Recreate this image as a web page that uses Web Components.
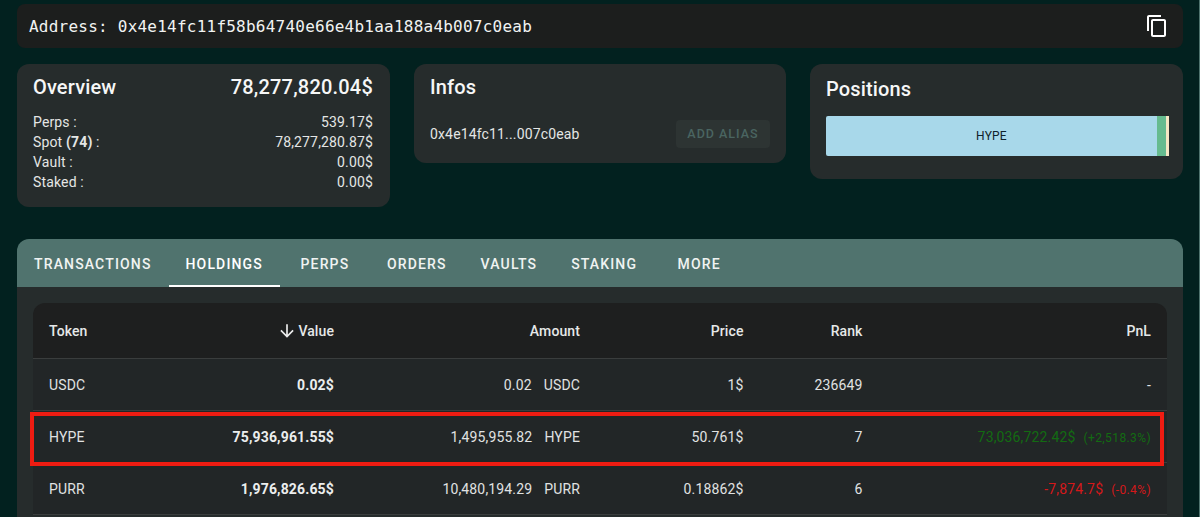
<!DOCTYPE html>
<html lang="en">
<head>
<meta charset="utf-8">
<title>Address</title>
<style>
  html, body { margin: 0; height: 517px; overflow: hidden; background: #02211f; }
  body { font-family: Roboto, "Liberation Sans", sans-serif; color: #fff; border-right: 1px solid #4f736e; box-sizing: border-box; }
</style>
</head>
<body>
<wallet-page></wallet-page>

<script>
class AddressBar extends HTMLElement {
  constructor() {
    super();
    this.attachShadow({ mode: 'open' });
  }

  connectedCallback() {
    this.shadowRoot.innerHTML = `
      <style>
        :host { display: flex; align-items: center; justify-content: space-between; height: 44px; padding: 0 14px 0 12px; box-sizing: border-box; background: #1c1e1d; border-radius: 8px; }
        .addr { font: 16px "DejaVu Sans Mono", monospace; letter-spacing: 0.23px; color: #f1f3f2; white-space: pre; }
        svg { display: block; }
      </style>
      <span class="addr">Address: ${this.getAttribute('address')}</span>
      <svg width="24" height="24" viewBox="0 0 24 24" fill="#fff"><path d="M16 1H4c-1.1 0-2 .9-2 2v14h2V3h12V1zm3 4H8c-1.1 0-2 .9-2 2v14c0 1.1.9 2 2 2h11c1.1 0 2-.9 2-2V7c0-1.1-.9-2-2-2zm0 16H8V7h11v14z"/></svg>
    `;
  }
}
customElements.define('address-bar', AddressBar);

class InfoCard extends HTMLElement {
  constructor() {
    super();
    this.attachShadow({ mode: 'open' });
  }

  connectedCallback() {
    this.shadowRoot.innerHTML = `
      <style>
        :host { display: block; box-sizing: border-box; background: #262c2c; border-radius: 12px; padding: 11px 17px 16px 16px; }
        .head { display: flex; justify-content: space-between; align-items: center; height: 24px; font-size: 20px; font-weight: 500; letter-spacing: 0.15px; color: #f6f7f7; }
      </style>
      <div class="head"><slot name="title"></slot><slot name="total"></slot></div>
      <slot></slot>
    `;
  }
}
customElements.define('info-card', InfoCard);

class StatRow extends HTMLElement {
  constructor() {
    super();
    this.attachShadow({ mode: 'open' });
  }

  connectedCallback() {
    this.shadowRoot.innerHTML = `
      <style>
        :host { display: flex; justify-content: space-between; height: 20px; line-height: 20px; font-size: 14px; letter-spacing: 0.15px; color: #e4e6e5; }
      </style>
      <span><slot></slot></span><span>${this.getAttribute('value')}</span>
    `;
  }
}
customElements.define('stat-row', StatRow);

class PositionBar extends HTMLElement {
  constructor() {
    super();
    this.attachShadow({ mode: 'open' });
  }

  connectedCallback() {
    this.shadowRoot.innerHTML = `
      <style>
        :host { display: flex; height: 40px; margin: 15px -3px 0 0; font-size: 12px; color: #10222b; letter-spacing: 0.2px; }
        div { display: flex; align-items: center; justify-content: center; }
        .a { flex: 1; background: #a8d8ea; border-radius: 2px 0 0 2px; }
        .b { width: 9px; background: #66bb8f; }
        .c { width: 3px; background: #f5e6c4; }
      </style>
      <div class="a">HYPE</div><div class="b"></div><div class="c"></div>
    `;
  }
}
customElements.define('position-bar', PositionBar);

class TabBar extends HTMLElement {
  constructor() {
    super();
    this.attachShadow({ mode: 'open' });
  }

  connectedCallback() {
    const tabs = ['TRANSACTIONS', 'HOLDINGS', 'PERPS', 'ORDERS', 'VAULTS', 'STAKING', 'MORE'];
    const active = this.getAttribute('active');
    this.shadowRoot.innerHTML = `
      <style>
        :host { display: flex; height: 48px; background: #50736e; border-radius: 12px 12px 0 0; }
        span { box-sizing: border-box; min-width: 90px; text-align: center; height: 48px; line-height: 50px; padding: 0 17px; font-size: 14px; font-weight: 500; letter-spacing: 1.15px; color: #f0f3f2; border-bottom: 2px solid transparent; }
        .on { color: #fff; border-bottom-color: #fff; }
      </style>
      ${tabs.map(t => `<span class="${t === active ? 'on' : ''}">${t}</span>`).join('')}
    `;
  }
}
customElements.define('tab-bar', TabBar);

const COLS = 'grid-template-columns: 120px 197px 246px 163.5px 119px 1fr;';

class HoldingsHead extends HTMLElement {
  constructor() {
    super();
    this.attachShadow({ mode: 'open' });
  }

  connectedCallback() {
    this.shadowRoot.innerHTML = `
      <style>
        :host { display: grid; ${COLS} height: 56px; box-sizing: border-box; align-items: center; background: #1e1f1f; border-radius: 12px 12px 0 0; border-bottom: 1px solid #3a3d3d; font-size: 14px; font-weight: 500; letter-spacing: 0.1px; color: #e6e8e8; }
        div { padding: 0 16px; text-align: right; }
        div:first-of-type { text-align: left; }
        .sort { display: flex; justify-content: flex-end; align-items: center; gap: 1px; }
        svg { display: block; }
      </style>
      <div>Token</div>
      <div class="sort"><svg width="20" height="20" viewBox="0 0 24 24" fill="#ececec"><path d="M20 12l-1.41-1.41L13 16.17V4h-2v12.17l-5.58-5.59L4 12l8 8 8-8z"/></svg>Value</div>
      <div>Amount</div>
      <div>Price</div>
      <div>Rank</div>
      <div>PnL</div>
    `;
  }
}
customElements.define('holdings-head', HoldingsHead);

class HoldingRow extends HTMLElement {
  constructor() {
    super();
    this.attachShadow({ mode: 'open' });
  }

  connectedCallback() {
    const a = (n) => this.getAttribute(n);
    const tone = a('tone') || '';
    this.shadowRoot.innerHTML = `
      <style>
        :host { display: grid; ${COLS} height: 52px; box-sizing: border-box; align-items: center; background: #222627; border-bottom: 1px solid #3a3d3d; font-size: 14px; letter-spacing: 0.15px; color: #e0e2e2; }
        div { padding: 0 16px; text-align: right; white-space: nowrap; }
        div:first-of-type { text-align: left; }
        .val { font-weight: 700; color: #eceeee; }
        .amt { display: flex; justify-content: flex-end; gap: 12px; }
        .up { color: #136b12; }
        .down { color: #d4181a; }
        small { font-size: 12px; letter-spacing: 0.4px; margin-left: 8px; }
      </style>
      <div>${a('token')}</div>
      <div class="val">${a('value')}</div>
      <div class="amt"><span>${a('amount')}</span><span>${a('token')}</span></div>
      <div>${a('price')}</div>
      <div>${a('rank')}</div>
      <div class="${tone}">${a('pnl')}${a('pct') ? `<small>${a('pct')}</small>` : ''}</div>
    `;
  }
}
customElements.define('holding-row', HoldingRow);

class HoldingsPanel extends HTMLElement {
  constructor() {
    super();
    this.attachShadow({ mode: 'open' });
  }

  connectedCallback() {
    this.shadowRoot.innerHTML = `
      <style>
        :host { display: block; position: relative; }
        .body { background: #262c2c; padding: 16px 16px 0; height: 300px; }
        .mark { position: absolute; left: 12.5px; top: 173px; width: 1134.5px; height: 54px; box-sizing: border-box; border: 4px solid #ee1c12; }
      </style>
      <tab-bar active="HOLDINGS"></tab-bar>
      <div class="body"><slot></slot></div>
      <div class="mark"></div>
    `;
  }
}
customElements.define('holdings-panel', HoldingsPanel);

class WalletPage extends HTMLElement {
  constructor() {
    super();
    this.attachShadow({ mode: 'open' });
  }

  connectedCallback() {
    this.shadowRoot.innerHTML = `
      <style>
        :host { display: block; padding: 4px 16px 0 17px; }
        .cards { display: grid; grid-template-columns: 373px 372px 373px; gap: 24px; align-items: start; margin: 16px 0 32px; }
        .overview { height: 143px; }
        .stats { margin-top: 13px; }
        .infos { height: 99px; padding-right: 16px; }
        .alias { display: flex; justify-content: space-between; align-items: center; margin: 21px 0 0; height: 28px; font-size: 14px; letter-spacing: 0.15px; color: #e4e6e5; }
        .btn { height: 28px; line-height: 28px; width: 94px; text-align: center; background: #2d3433; border-radius: 4px; font-size: 12.5px; font-weight: 500; letter-spacing: 1px; color: #4a6561; }
        .positions { height: 115px; padding-top: 13px; }
        b { font-weight: 700; }
      </style>
      <address-bar address="0x4e14fc11f58b64740e66e4b1aa188a4b007c0eab"></address-bar>
      <div class="cards">
        <info-card class="overview">
          <span slot="title">Overview</span>
          <span slot="total" style="letter-spacing:.2px">78,277,820.04$</span>
          <div class="stats">
            <stat-row value="539.17$">Perps :</stat-row>
            <stat-row value="78,277,280.87$">Spot <b>(74)</b> :</stat-row>
            <stat-row value="0.00$">Vault :</stat-row>
            <stat-row value="0.00$">Staked :</stat-row>
          </div>
        </info-card>
        <info-card class="infos">
          <span slot="title">Infos</span>
          <div class="alias"><span>0x4e14fc11...007c0eab</span><span class="btn">ADD ALIAS</span></div>
        </info-card>
        <info-card class="positions">
          <span slot="title">Positions</span>
          <position-bar></position-bar>
        </info-card>
      </div>
      <holdings-panel>
        <holdings-head></holdings-head>
        <holding-row token="USDC" value="0.02$" amount="0.02" price="1$" rank="236649" pnl="-"></holding-row>
        <holding-row token="HYPE" value="75,936,961.55$" amount="1,495,955.82" price="50.761$" rank="7" pnl="73,036,722.42$" pct="(+2,518.3%)" tone="up"></holding-row>
        <holding-row token="PURR" value="1,976,826.65$" amount="10,480,194.29" price="0.18862$" rank="6" pnl="-7,874.7$" pct="(-0.4%)" tone="down"></holding-row>
      </holdings-panel>
    `;
  }
}
customElements.define('wallet-page', WalletPage);
</script>
</body>
</html>
